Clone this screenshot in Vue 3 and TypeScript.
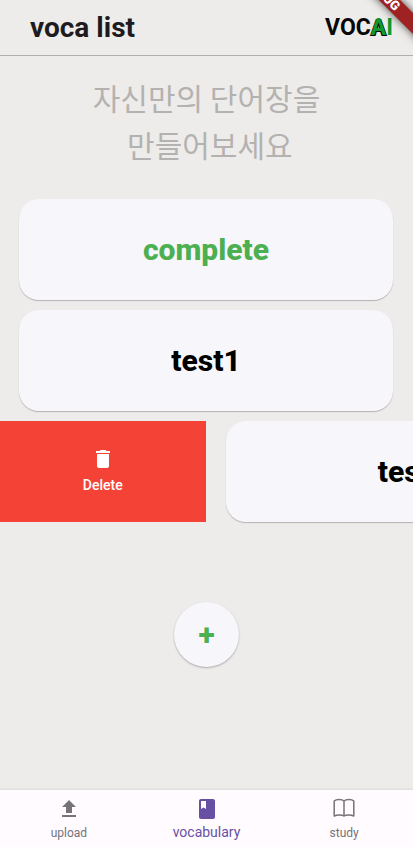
<script setup lang="ts">
import { ref } from 'vue'

interface Deck {
  id: number
  name: string
  complete: boolean
  swiped: boolean
}

const decks = ref<Deck[]>([
  { id: 1, name: 'complete', complete: true, swiped: false },
  { id: 2, name: 'test1', complete: false, swiped: false },
  { id: 3, name: 'test2', complete: false, swiped: true },
])

const tab = ref('vocabulary')

function removeDeck(id: number): void {
  decks.value = decks.value.filter((deck) => deck.id !== id)
}

function addDeck(): void {
  const id = Math.max(0, ...decks.value.map((deck) => deck.id)) + 1
  decks.value.push({ id, name: `test${id}`, complete: false, swiped: false })
}
</script>

<template>
  <div class="app">
    <header class="bar">
      <h1 class="title">voca list</h1>
      <div class="logo">VOC<span class="logo-a">A</span><span class="logo-i">I</span></div>
    </header>
    <div class="ribbon">DEBUG</div>

    <main class="content">
      <p class="intro">자신만의 단어장을<br />&nbsp;만들어보세요</p>

      <ul class="decks">
        <li v-for="deck in decks" :key="deck.id" class="row" :class="{ swiped: deck.swiped }">
          <button v-if="deck.swiped" class="delete" type="button" @click="removeDeck(deck.id)">
            <svg width="24" height="24" viewBox="0 0 24 24" fill="currentColor" aria-hidden="true">
              <path d="M6 19c0 1.100.9 2 2 2h8c1.100 0 2-.9 2-2V7H6v12zM19 4h-3.500l-1-1h-5l-1 1H5v2h14V4z" />
            </svg>
            <span>Delete</span>
          </button>
          <button class="card" :class="{ complete: deck.complete }" type="button">{{ deck.name }}</button>
        </li>
      </ul>

      <button class="add" type="button" @click="addDeck">+</button>
    </main>

    <nav class="tabs">
      <button class="tab" :class="{ active: tab === 'upload' }" type="button" @click="tab = 'upload'">
        <svg width="24" height="24" viewBox="0 0 24 24" fill="currentColor" aria-hidden="true">
          <path d="M9 16h6v-6h4l-7-7-7 7h4v6zM5 18h14v2H5z" />
        </svg>
        <span>upload</span>
      </button>
      <button class="tab" :class="{ active: tab === 'vocabulary' }" type="button" @click="tab = 'vocabulary'">
        <svg width="24" height="24" viewBox="0 0 24 24" fill="currentColor" aria-hidden="true">
          <path fill-rule="evenodd" d="M18 2H6C4.900 2 4 2.900 4 4v16c0 1.100.9 2 2 2h12c1.100 0 2-.9 2-2V4c0-1.100-.9-2-2-2zM6 4h5v8l-2.500-1.500L6 12V4z" />
        </svg>
        <span>vocabulary</span>
      </button>
      <button class="tab" :class="{ active: tab === 'study' }" type="button" @click="tab = 'study'">
        <svg width="24" height="24" viewBox="0 0 24 24" fill="none" stroke="currentColor" stroke-width="1.500" stroke-linejoin="round" stroke-linecap="round" aria-hidden="true">
          <path d="M12 4C11 2.900 9.300 2.400 7.200 2.400S3.200 2.900 2.200 4V19C3.500 18.300 5.200 17.900 7.200 17.900s3.800.3 4.800 1.100c1-.8 2.800-1.100 4.800-1.100s3.700.4 5 1.100V4C20.800 2.900 18.900 2.400 16.800 2.400S13 2.900 12 4V19" />
        </svg>
        <span>study</span>
      </button>
    </nav>
  </div>
</template>

<style>
body {
  margin: 0;
  background: #edecea;
}
</style>

<style scoped>
.app {
  position: relative;
  display: flex;
  flex-direction: column;
  min-height: 100vh;
  overflow: hidden;
  background: #edecea;
  font-family: Roboto, "Noto Sans CJK KR", sans-serif;
}

button {
  margin: 0;
  padding: 0;
  border: 0;
  background: none;
  font-family: inherit;
  cursor: pointer;
}

.bar {
  display: flex;
  align-items: center;
  justify-content: space-between;
  box-sizing: border-box;
  height: 56px;
  padding: 0 20px 0 30px;
  border-bottom: 1px solid #afafae;
}

.title {
  margin: 0;
  color: #1d1b20;
  font-size: 28px;
  font-weight: 700;
}

.logo {
  color: #080808;
  font-family: Roboto, sans-serif;
  font-size: 23px;
  font-weight: 700;
}

.logo-a {
  color: #0e9b2b;
  text-shadow: 1px 1px 0 #080808, -1px 1px 0 #080808;
}

.logo-i {
  color: #0e9b2b;
}

.ribbon {
  position: absolute;
  top: 4px;
  right: -48px;
  width: 120px;
  height: 15px;
  background: #9f2222;
  box-shadow: 0 0 8px rgba(0, 0, 0, 0.7);
  color: #fff;
  font-size: 13px;
  font-weight: 900;
  line-height: 15px;
  text-indent: 14px;
  transform: rotate(45deg);
}

.content {
  display: flex;
  flex: 1;
  flex-direction: column;
  align-items: center;
  padding-top: 18px;
}

.intro {
  margin: 0;
  color: #b4b2b0;
  font-family: "Noto Sans CJK KR", sans-serif;
  font-size: 30px;
  font-weight: 400;
  line-height: 47px;
  text-align: center;
}

.decks {
  display: flex;
  flex-direction: column;
  gap: 10px;
  width: 100%;
  margin: 0;
  padding: 31px 0 0;
  list-style: none;
}

.row {
  display: flex;
  overflow-x: clip;
}

.card {
  flex: 0 0 auto;
  width: calc(100% - 39px);
  height: 101px;
  margin: 0 20px 0 19px;
  border-radius: 20px;
  background: #f7f6fb;
  box-shadow: 0 1px 1px rgba(0, 0, 0, 0.24);
  color: #000;
  font-size: 30px;
  font-weight: 800;
}

.card.complete {
  color: #4caf50;
}

.swiped .card {
  margin-left: 20px;
}

.delete {
  display: flex;
  flex: 0 0 calc(50% - 1px);
  flex-direction: column;
  align-items: center;
  justify-content: center;
  gap: 4px;
  padding-bottom: 2px;
  background: #f44336;
  color: #fff;
  font-size: 14px;
  font-weight: 500;
  line-height: 20px;
}

.add {
  width: 65px;
  height: 65px;
  margin: 80px 0 40px;
  border-radius: 50%;
  background: #f7f6fb;
  box-shadow: 0 1px 2px rgba(0, 0, 0, 0.28);
  color: #4caf50;
  font-size: 30px;
  font-weight: 800;
}

.tabs {
  display: flex;
  height: 57px;
  background: #fffbff;
  box-shadow: 0 -1px 2px rgba(0, 0, 0, 0.08);
}

.tab {
  display: flex;
  flex: 1;
  flex-direction: column;
  align-items: center;
  padding-top: 7px;
  gap: 4px;
  color: #757477;
  font-size: 12px;
  line-height: 16px;
}

.tab.active {
  gap: 3px;
  color: #6750a4;
  font-size: 14px;
}
</style>
